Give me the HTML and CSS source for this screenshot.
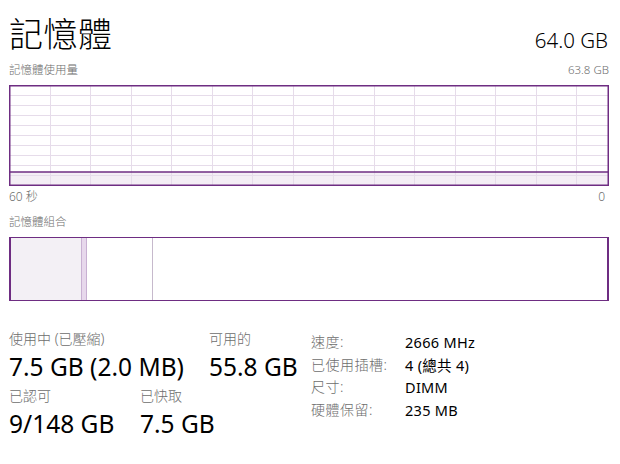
FILE: index.html
```html
<!DOCTYPE html>
<html lang="zh-Hant">
<head>
<meta charset="utf-8">
<link rel="stylesheet" href="styles.css">
</head>
<body>
<div class="panel">
  <div class="head">
    <div class="title">記憶體</div>
    <div class="total">64.0 GB</div>
  </div>
  <div class="sub">
    <span>記憶體使用量</span>
    <span>63.8 GB</span>
  </div>
  <svg class="graph" width="600" height="101" viewBox="0 0 600 101">
    <rect x="0" y="87" width="600" height="14" fill="#f4eef5"/>
    <g stroke="#e6dcea" stroke-width="1">
      <line x1="0" y1="10.5" x2="600" y2="10.5"/>
      <line x1="0" y1="20.5" x2="600" y2="20.5"/>
      <line x1="0" y1="30.5" x2="600" y2="30.5"/>
      <line x1="0" y1="40.5" x2="600" y2="40.5"/>
      <line x1="0" y1="50.5" x2="600" y2="50.5"/>
      <line x1="0" y1="60.5" x2="600" y2="60.5"/>
      <line x1="0" y1="70.5" x2="600" y2="70.5"/>
      <line x1="0" y1="80.5" x2="600" y2="80.5"/>
      <line x1="0" y1="90.5" x2="600" y2="90.5"/>
      <line x1="41.5" y1="0" x2="41.5" y2="101"/>
      <line x1="81.5" y1="0" x2="81.5" y2="101"/>
      <line x1="122.5" y1="0" x2="122.5" y2="101"/>
      <line x1="162.5" y1="0" x2="162.5" y2="101"/>
      <line x1="203.5" y1="0" x2="203.5" y2="101"/>
      <line x1="243.5" y1="0" x2="243.5" y2="101"/>
      <line x1="284.5" y1="0" x2="284.5" y2="101"/>
      <line x1="324.5" y1="0" x2="324.5" y2="101"/>
      <line x1="365.5" y1="0" x2="365.5" y2="101"/>
      <line x1="405.5" y1="0" x2="405.5" y2="101"/>
      <line x1="446.5" y1="0" x2="446.5" y2="101"/>
      <line x1="486.5" y1="0" x2="486.5" y2="101"/>
      <line x1="527.5" y1="0" x2="527.5" y2="101"/>
      <line x1="567.5" y1="0" x2="567.5" y2="101"/>
    </g>
    <line x1="0" y1="87" x2="600" y2="87" stroke="#6e2d82" stroke-width="1.5"/>
    <rect x="0.75" y="0.75" width="598.5" height="99.5" fill="none" stroke="#6e2d82" stroke-width="1.5"/>
  </svg>
  <div class="axis">
    <span>60 秒</span>
    <span>0</span>
  </div>
  <div class="sub comp-label">記憶體組合</div>
  <div class="comp">
    <div class="inuse"></div>
    <div class="modified"></div>
    <div class="standby"></div>
    <div class="free"></div>
  </div>
  <div class="stats">
    <div class="left">
      <div class="row">
        <div class="stat w200">
          <div class="label">使用中 (已壓縮)</div>
          <div class="value">7.5 GB (2.0 MB)</div>
        </div>
        <div class="stat">
          <div class="label">可用的</div>
          <div class="value">55.8 GB</div>
        </div>
      </div>
      <div class="row">
        <div class="stat w131">
          <div class="label">已認可</div>
          <div class="value">9/148 GB</div>
        </div>
        <div class="stat">
          <div class="label">已快取</div>
          <div class="value">7.5 GB</div>
        </div>
      </div>
    </div>
    <div class="props">
      <div class="k">速度:</div><div class="v">2666 MHz</div>
      <div class="k">已使用插槽:</div><div class="v">4 (總共 4)</div>
      <div class="k">尺寸:</div><div class="v">DIMM</div>
      <div class="k">硬體保留:</div><div class="v">235 MB</div>
    </div>
  </div>
</div>
</body>
</html>
```
FILE: styles.css
```css
html, body {
  margin: 0;
  padding: 0;
  background: #ffffff;
}
body {
  font-family: "Noto Sans", "Noto Sans CJK TC", sans-serif;
  color: #000;
}
.panel {
  width: 600px;
  padding: 12px 0 0 9px;
}
.head {
  display: flex;
  justify-content: space-between;
  align-items: flex-end;
  height: 42px;
}
.title {
  font-family: "Noto Sans CJK TC", sans-serif;
  font-weight: 300;
  font-size: 34px;
  line-height: 42px;
  letter-spacing: 0.5px;
}
.total {
  font-weight: 300;
  font-size: 20.5px;
  line-height: 28px;
  margin-right: 1px;
}
.sub {
  display: flex;
  justify-content: space-between;
  font-size: 11.5px;
  line-height: 16px;
  color: #6d6d6d;
  height: 18px;
  margin-top: 8px;
  font-weight: 300;
}
.graph {
  display: block;
  margin-top: 5px;
}
.axis {
  display: flex;
  justify-content: space-between;
  font-size: 12px;
  line-height: 16px;
  color: #6d6d6d;
  margin-top: 3px;
  padding-right: 4px;
  font-weight: 300;
}
.comp-label {
  margin-top: 9px;
}
.comp {
  display: flex;
  width: 596px;
  height: 62px;
  margin-top: 5px;
  border: 2px solid #6e2d82;
  border-top-width: 1.5px;
  border-bottom-width: 1.5px;
}
.inuse {
  width: 70px;
  background: #f3f0f5;
}
.modified {
  width: 4px;
  background: #e7d8ec;
  border-left: 1px solid #c8b0d2;
  border-right: 1px solid #c8b0d2;
}
.standby {
  width: 65px;
  border-right: 1px solid #c6b9cc;
}
.free {
  flex: 1;
}
.stats {
  display: flex;
  margin-top: 29px;
}
.left {
  width: 302px;
}
.row {
  display: flex;
  margin-bottom: 5px;
}
.stat.w200 { width: 200px; }
.stat.w131 { width: 131px; }
.label {
  font-size: 14px;
  line-height: 18px;
  color: #6d6d6d;
  font-weight: 300;
}
.value {
  font-size: 24.5px;
  line-height: 31px;
  font-weight: 400;
  margin-top: 3px;
}
.props {
  display: grid;
  grid-template-columns: 94px auto;
  grid-auto-rows: 22.5px;
  font-size: 14px;
  line-height: 22.5px;
  margin-top: 1px;
}
.k {
  color: #6d6d6d;
  font-weight: 300;
  letter-spacing: 0.5px;
}
.v {
  color: #000;
  font-size: 14.5px;
  letter-spacing: 0.3px;
}
```
